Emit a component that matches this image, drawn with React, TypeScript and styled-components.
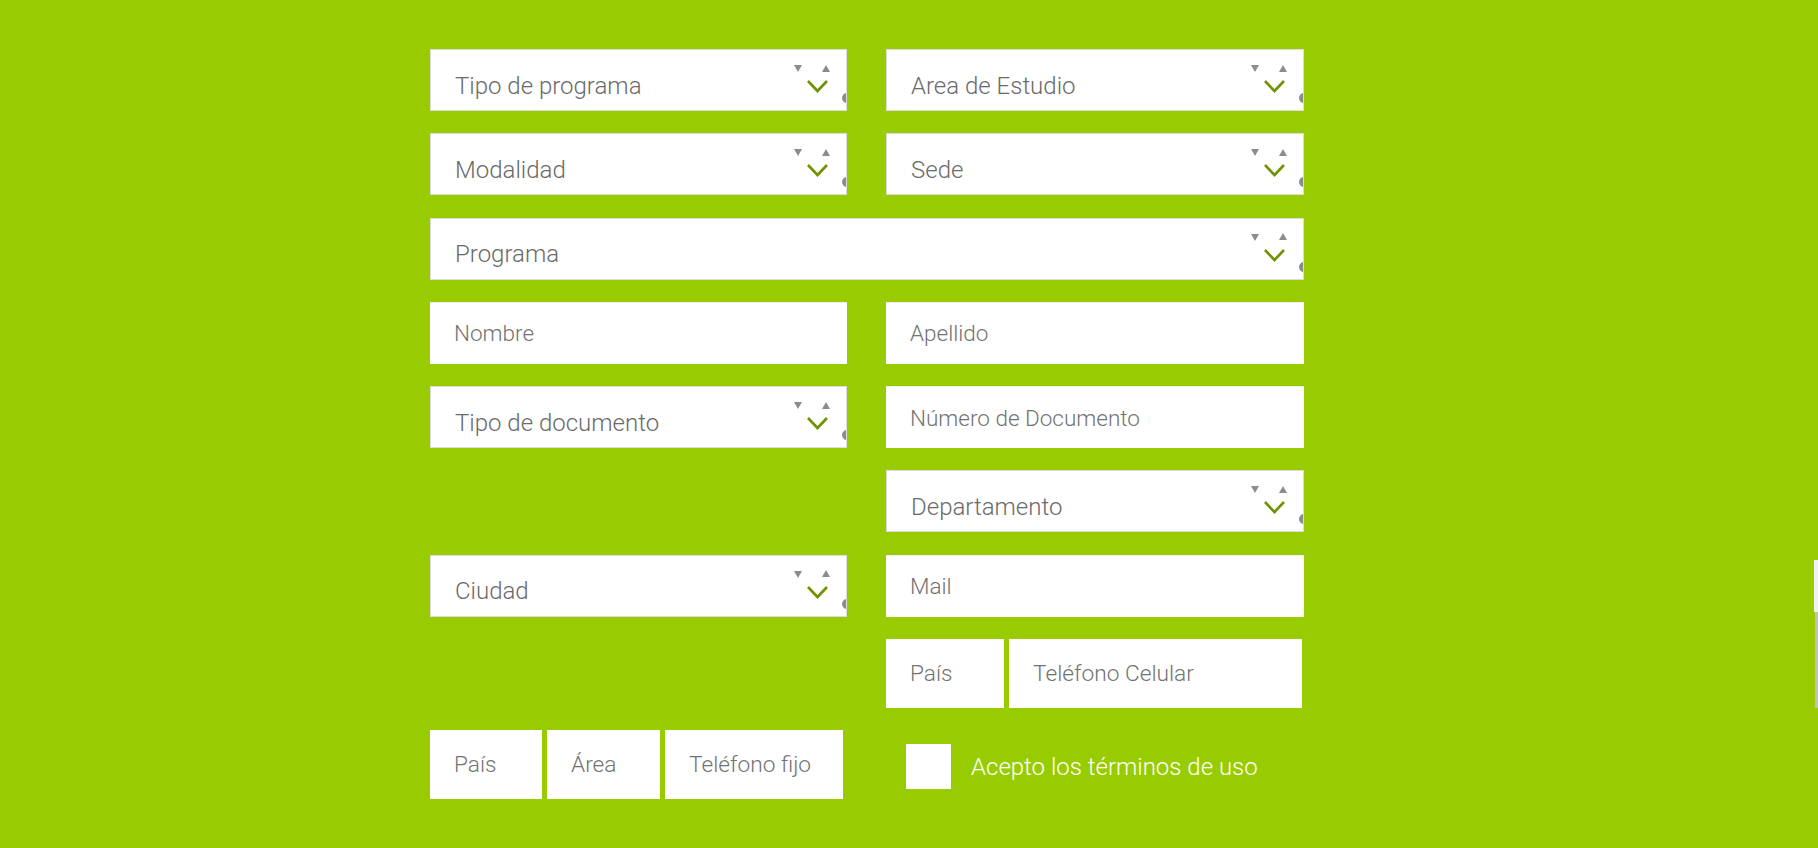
import styled, { createGlobalStyle } from "styled-components";

const GlobalStyle = createGlobalStyle`
  html, body {
    margin: 0;
    padding: 0;
    background: #99cc00;
    font-family: Roboto, "Liberation Sans", sans-serif;
  }
`;

const Page = styled.div`
  min-height: 848px;
  padding: 49px 0 0 430px;
  box-sizing: border-box;
`;

const Form = styled.form`
  display: grid;
  grid-template-columns: 417px 418px;
  grid-template-rows: repeat(7, 62px) 69px 69px;
  column-gap: 39px;
  row-gap: 22.3px;
  width: 874px;
`;

const Cell = styled.div<{ $col?: string }>`
  grid-column: ${(p) => p.$col || "auto"};
  position: relative;
`;

const SelectBox = styled.div`
  position: relative;
  height: 62px;
  background: #fff;
  border: 1px solid #dcdcdc;
  box-sizing: border-box;
  overflow: hidden;
`;

const NativeSelect = styled.select`
  appearance: none;
  -webkit-appearance: none;
  width: 100%;
  height: 100%;
  border: none;
  outline: none;
  background: transparent;
  padding: 11px 0 0 24px;
  font-family: Roboto, "Liberation Sans", sans-serif;
  font-weight: 300;
  font-size: 24px;
  color: #6a6a6a;
`;

const TriDown = styled.span`
  position: absolute;
  top: 15px;
  right: 44px;
  width: 0;
  height: 0;
  border-left: 4.5px solid transparent;
  border-right: 4.5px solid transparent;
  border-top: 7.5px solid #8c8c8c;
`;

const TriUp = styled.span`
  position: absolute;
  top: 14.5px;
  right: 16px;
  width: 0;
  height: 0;
  border-left: 4.5px solid transparent;
  border-right: 4.5px solid transparent;
  border-bottom: 7.5px solid #8c8c8c;
`;

const Chevron = styled.svg`
  position: absolute;
  top: 29px;
  right: 17px;
  width: 23px;
  height: 15px;
`;

const Knob = styled.span`
  position: absolute;
  top: 43px;
  right: -6px;
  width: 10px;
  height: 10px;
  border-radius: 50%;
  background: #8c8c8c;
`;

const TextInput = styled.input`
  width: 100%;
  height: 62px;
  box-sizing: border-box;
  border: none;
  border-top: 1px solid #eeeeee;
  outline: none;
  background: #fff;
  padding: 0 0 0 24px;
  font-family: Roboto, "Liberation Sans", sans-serif;
  font-weight: 300;
  font-size: 22.5px;
  color: #6e6e6e;
  &::placeholder {
    color: #737373;
  }
`;

const PhoneRow = styled.div`
  display: flex;
  gap: 5px;
  height: 69px;
`;

const PhoneInput = styled.input<{ $w: number }>`
  width: ${(p) => p.$w}px;
  flex: none;
  height: 69px;
  box-sizing: border-box;
  border: none;
  outline: none;
  background: #fff;
  padding: 0 0 0 24px;
  font-family: Roboto, "Liberation Sans", sans-serif;
  font-weight: 300;
  font-size: 22.7px;
  color: #6e6e6e;
  &::placeholder {
    color: #737373;
  }
`;

const Terms = styled.label`
  display: flex;
  align-items: center;
  gap: 20px;
  height: 69px;
  padding: 4px 0 0 20px;
  box-sizing: border-box;
  font-weight: 300;
  font-size: 24px;
  color: #fff;
`;

const Box = styled.span`
  width: 45px;
  height: 45px;
  background: #fff;
  flex: none;
`;

const ScrollTrack = styled.div`
  position: fixed;
  right: 0;
  top: 560px;
  width: 4px;
  height: 52px;
  background: #f1f1f1;
`;

const ScrollThumb = styled.div`
  position: fixed;
  right: 0;
  top: 612px;
  width: 3px;
  height: 96px;
  background: #c1c1c1;
`;

function Select({ label }: { label: string }) {
  return (
    <SelectBox>
      <NativeSelect defaultValue="">
        <option value="">{label}</option>
      </NativeSelect>
      <TriDown />
      <TriUp />
      <Chevron viewBox="0 0 23 15">
        <polyline
          points="2,2 11.5,12 21,2"
          fill="none"
          stroke="#6f9300"
          strokeWidth="2.6"
        />
      </Chevron>
      <Knob />
    </SelectBox>
  );
}

export default function App() {
  return (
    <Page>
      <GlobalStyle />
      <Form>
        <Cell>
          <Select label="Tipo de programa" />
        </Cell>
        <Cell>
          <Select label="Area de Estudio" />
        </Cell>
        <Cell>
          <Select label="Modalidad" />
        </Cell>
        <Cell>
          <Select label="Sede" />
        </Cell>
        <Cell $col="1 / span 2">
          <Select label="Programa" />
        </Cell>
        <Cell>
          <TextInput placeholder="Nombre" />
        </Cell>
        <Cell>
          <TextInput placeholder="Apellido" />
        </Cell>
        <Cell>
          <Select label="Tipo de documento" />
        </Cell>
        <Cell>
          <TextInput placeholder="Número de Documento" />
        </Cell>
        <Cell $col="2">
          <Select label="Departamento" />
        </Cell>
        <Cell>
          <Select label="Ciudad" />
        </Cell>
        <Cell>
          <TextInput placeholder="Mail" />
        </Cell>
        <Cell $col="2">
          <PhoneRow>
            <PhoneInput $w={118} placeholder="País" />
            <PhoneInput $w={293} placeholder="Teléfono Celular" />
          </PhoneRow>
        </Cell>
        <Cell>
          <PhoneRow>
            <PhoneInput $w={112} placeholder="País" />
            <PhoneInput $w={113} placeholder="Área" />
            <PhoneInput $w={178} placeholder="Teléfono fijo" />
          </PhoneRow>
        </Cell>
        <Cell>
          <Terms>
            <Box />
            Acepto los términos de uso
          </Terms>
        </Cell>
      </Form>
      <ScrollTrack />
      <ScrollThumb />
    </Page>
  );
}
